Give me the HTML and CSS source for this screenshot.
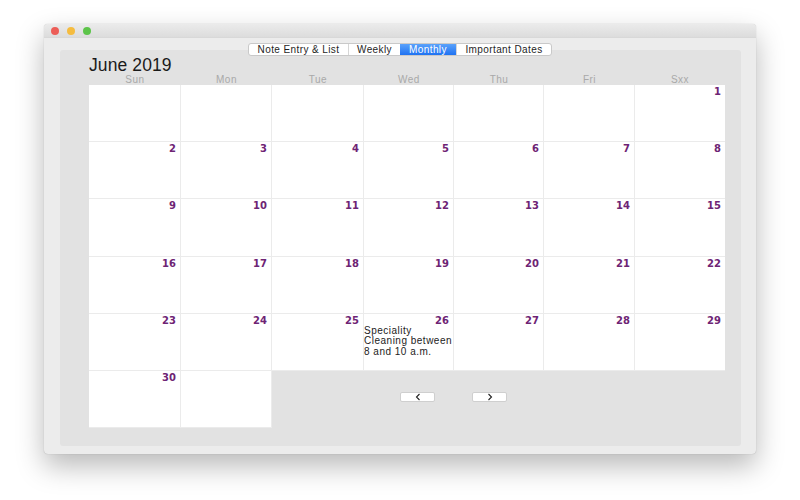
FILE: index.html
```html
<!DOCTYPE html>
<html>
<head>
<meta charset="utf-8">
<link rel="stylesheet" href="styles.css">
</head>
<body>
<div class="window">
  <div class="titlebar">
    <span class="light red"></span>
    <span class="light yellow"></span>
    <span class="light green"></span>
  </div>
  <div class="content">
    <div class="segmented">
      <span class="seg">Note Entry &amp; List</span>
      <span class="seg">Weekly</span>
      <span class="seg active">Monthly</span>
      <span class="seg">Important Dates</span>
    </div>
    <div class="panel">
      <div class="title">June 2019</div>
      <div class="heads">
        <span>Sun</span><span>Mon</span><span>Tue</span><span>Wed</span><span>Thu</span><span>Fri</span><span>Sxx</span>
      </div>
      <div class="grid">
        <div class="cell"></div><div class="cell"></div><div class="cell"></div><div class="cell"></div><div class="cell"></div><div class="cell"></div><div class="cell"><span class="num">1</span></div>
        <div class="cell"><span class="num">2</span></div><div class="cell"><span class="num">3</span></div><div class="cell"><span class="num">4</span></div><div class="cell"><span class="num">5</span></div><div class="cell"><span class="num">6</span></div><div class="cell"><span class="num">7</span></div><div class="cell"><span class="num">8</span></div>
        <div class="cell"><span class="num">9</span></div><div class="cell"><span class="num">10</span></div><div class="cell"><span class="num">11</span></div><div class="cell"><span class="num">12</span></div><div class="cell"><span class="num">13</span></div><div class="cell"><span class="num">14</span></div><div class="cell"><span class="num">15</span></div>
        <div class="cell"><span class="num">16</span></div><div class="cell"><span class="num">17</span></div><div class="cell"><span class="num">18</span></div><div class="cell"><span class="num">19</span></div><div class="cell"><span class="num">20</span></div><div class="cell"><span class="num">21</span></div><div class="cell"><span class="num">22</span></div>
        <div class="cell"><span class="num">23</span></div><div class="cell"><span class="num">24</span></div><div class="cell"><span class="num">25</span></div><div class="cell"><span class="num">26</span><div class="event">Speciality Cleaning between 8 and 10 a.m.</div></div><div class="cell"><span class="num">27</span></div><div class="cell"><span class="num">28</span></div><div class="cell"><span class="num">29</span></div>
        <div class="cell"><span class="num">30</span></div><div class="cell"></div>
        <div class="nav">
          <button class="btn"><svg width="8" height="8" viewBox="0 0 8 8"><path d="M5.5 1 L2.5 4 L5.5 7" fill="none" stroke="#222" stroke-width="1.1"/></svg></button>
          <button class="btn"><svg width="8" height="8" viewBox="0 0 8 8"><path d="M2.5 1 L5.5 4 L2.5 7" fill="none" stroke="#222" stroke-width="1.1"/></svg></button>
        </div>
      </div>
    </div>
  </div>
</div>
</body>
</html>
```
FILE: styles.css
```css
html, body {
  margin: 0;
  padding: 0;
  background: #ffffff;
  width: 800px;
  height: 500px;
  overflow: hidden;
  font-family: "Liberation Sans", Arial, sans-serif;
}
.window {
  position: relative;
  margin: 24px 0 0 44px;
  width: 712px;
  height: 430px;
  background: #ececec;
  border-radius: 4px;
  box-shadow: 0 12px 28px rgba(0, 0, 0, 0.28), 0 0 1px rgba(0, 0, 0, 0.3);
  display: flex;
  flex-direction: column;
}
.titlebar {
  height: 13px;
  border-bottom: 1px solid #d8d8d8;
  background: linear-gradient(#ebebeb, #dcdcdc);
  border-radius: 4px 4px 0 0;
  display: flex;
  align-items: center;
  padding-left: 7px;
  gap: 8px;
}
.light {
  width: 8px;
  height: 8px;
  border-radius: 50%;
  display: block;
}
.red { background: #ec5d57; }
.yellow { background: #f5bc3f; }
.green { background: #5cc449; }
.content {
  position: relative;
  flex: 1;
  padding: 12px 15px 8px 16px;
  display: flex;
  flex-direction: column;
}
.segmented {
  position: absolute;
  top: 5px;
  left: 204px;
  display: flex;
  height: 13px;
  background: #ffffff;
  border: 1px solid #c9c9c9;
  border-radius: 3px;
  font-size: 10px;
  letter-spacing: 0.4px;
  color: #1e1e1e;
  z-index: 2;
  box-sizing: border-box;
}
.seg {
  display: flex;
  align-items: center;
  justify-content: center;
  padding: 0;
  border-left: 1px solid #d6d6d6;
  line-height: 11px;
}
.seg:first-child { border-left: none; width: 99px; }
.seg:nth-child(2) { width: 51px; }
.seg:nth-child(3) { width: 56px; }
.seg:nth-child(4) { width: 94px; }
.seg.active {
  background: linear-gradient(#5aa2fb, #1f72f2);
  color: #ffffff;
  border-left: none;
}
.panel {
  flex: 1;
  background: #e2e2e2;
  border-radius: 3px;
  padding: 7px 15px 0 29px;
  display: flex;
  flex-direction: column;
}
.title {
  font-size: 17.5px;
  color: #1a1a1a;
  line-height: 17px;
  height: 17px;
  letter-spacing: 0.1px;
}
.heads {
  display: grid;
  grid-template-columns: 92px 91px 92px 90px 90px 91px 90px;
  font-size: 10px;
  letter-spacing: 0.5px;
  color: #a9a9a9;
  text-align: center;
  line-height: 11px;
}
.grid {
  display: grid;
  grid-template-columns: 92px 91px 92px 90px 90px 91px 90px;
  grid-auto-rows: 57.2px;
}
.cell {
  background: #ffffff;
  border-right: 1px solid #ebebeb;
  border-bottom: 1px solid #ebebeb;
  box-sizing: border-box;
  display: flex;
  flex-direction: column;
}
.cell:nth-child(7n) { border-right: none; }
.num {
  align-self: flex-end;
  font-family: "DejaVu Sans", sans-serif;
  font-weight: bold;
  font-size: 10px;
  color: #6e2474;
  padding: 2px 4px 0 0;
  line-height: 10px;
}
.event {
  font-size: 10px;
  letter-spacing: 0.5px;
  line-height: 10.5px;
  color: #222222;
  margin-top: 0;
}
.nav {
  grid-column: 3 / 8;
  display: flex;
  align-items: flex-start;
  padding-left: 128px;
  gap: 37px;
  padding-top: 21px;
}
.btn {
  width: 35px;
  height: 10px;
  padding: 0;
  background: #ffffff;
  border: 1px solid #cfcfcf;
  border-radius: 2px;
  display: flex;
  align-items: center;
  justify-content: center;
}
.btn svg { display: block; }
```
